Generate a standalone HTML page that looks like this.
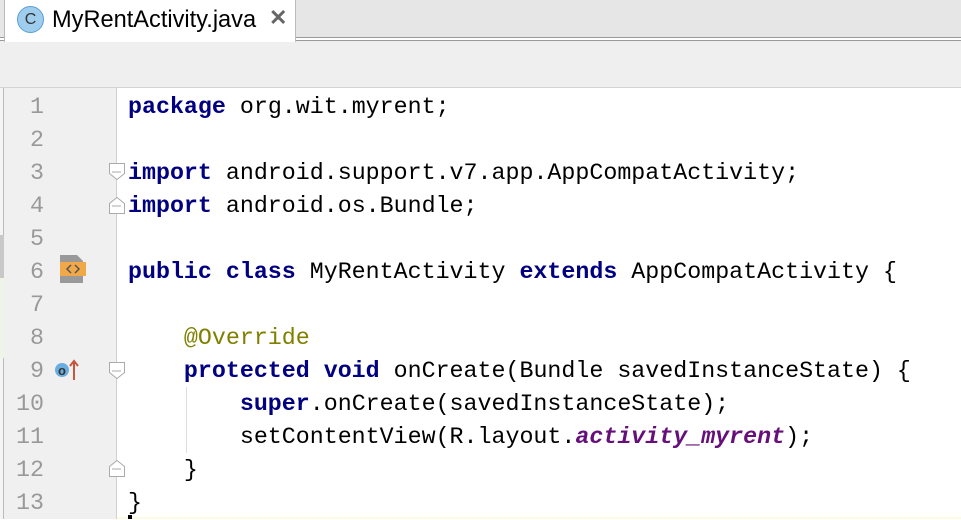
<!DOCTYPE html>
<html><head><meta charset="utf-8"><style>
*{margin:0;padding:0;box-sizing:border-box}
body{width:961px;height:519px;overflow:hidden;background:#fff;position:relative;font-family:"Liberation Sans",sans-serif}
.tabbar{position:absolute;left:0;top:0;width:961px;height:38px;background:#e6e6e6;border-bottom:1px solid #999}
.tab{position:absolute;left:4px;top:0;width:292px;height:42px;background:#fff;border-left:1px solid #bbb;border-right:1px solid #bbb;z-index:2}
.tab .ic{position:absolute;left:12px;top:6px;width:27px;height:27px;border-radius:50%;background:#9fcdee;border:1px solid #5a9fd6;color:#333;font-size:16px;text-align:center;line-height:25px}
.tab .t{position:absolute;left:47px;top:7px;font-size:23.6px;color:#000}
.tab .x{position:absolute;left:264px;top:5px;font-size:22px;color:#666;font-weight:bold}
.strip{position:absolute;left:0;top:40px;width:961px;height:48px;background:#efefef;border-top:1px solid #999;border-bottom:1px solid #d4d4d4}
.left{position:absolute;left:0;top:88px;width:4px;height:431px;background:#f4f4f4;border-right:1px solid #bbb}
.gut{position:absolute;left:4px;top:88px;width:113px;height:431px;background:#f0f0f0;border-right:1px solid #d0d0d0}
.ln{position:absolute;left:4px;top:91px;width:40px;font:23.3px/33px "Liberation Mono",monospace;color:#999;text-align:right}
.code{position:absolute;left:128px;top:91px;font:23.3px/33px "Liberation Mono",monospace;color:#000;white-space:pre}
.k{color:#000080;font-weight:bold}.a{color:#808000}.f{color:#660e7a;font-weight:bold;font-style:italic}
</style></head><body>
<div class="tabbar"></div>
<div class="tab"><div class="ic">C</div><div class="t">MyRentActivity.java</div><div class="x">✕</div></div>
<div class="strip"></div>
<div class="left"></div>
<div style="position:absolute;left:0;top:235px;width:4px;height:43px;background:#c8c8c8"></div>
<div style="position:absolute;left:0;top:278px;width:4px;height:80px;background:#eef5e8"></div>
<div class="gut"></div>
<div style="position:absolute;left:117px;top:517px;width:844px;height:2px;background:#fffae3"></div>
<div class="ln">1<br>2<br>3<br>4<br>5<br>6<br>7<br>8<br>9<br>10<br>11<br>12<br>13</div>
<div style="position:absolute;left:186px;top:387px;width:1px;height:66px;background:#ddd"></div>
<svg style="position:absolute;left:0;top:0" width="961" height="519">
<g fill="#fff" stroke="#aaa" stroke-width="1">
<path d="M109.5 163.5h15v10l-7.5 6l-7.5-6z"/><path d="M109.5 213.5h15v-10l-7.5-6l-7.5 6z"/>
<path d="M109.5 362.5h15v10l-7.5 6l-7.5-6z"/><path d="M109.5 476.5h15v-10l-7.5-6l-7.5 6z"/>
</g>
<g stroke="#aaa"><path d="M112 172h9M112 206h9M112 371h9M112 469h9"/></g>
<path d="M60 255h17l6 6v22h-23z" fill="#999"/><rect x="60" y="262" width="26" height="14" fill="#f0a848"/>
<path d="M71 265l-4 4l4 4M75 265l4 4l-4 4" stroke="#555" stroke-width="1.5" fill="none"/>
<circle cx="62" cy="370" r="7" fill="#6aaee0"/><text x="62" y="375" font-size="13" font-family="Liberation Sans" font-weight="bold" text-anchor="middle" fill="#333">o</text>
<path d="M74 380v-19M70 366l4-5l4 5" stroke="#c8553d" stroke-width="2" fill="none"/>
<rect x="128" y="515" width="4" height="4" fill="#000"/>
</svg>
<div class="code"><span class="k">package</span> org.wit.myrent;

<span class="k">import</span> android.support.v7.app.AppCompatActivity;
<span class="k">import</span> android.os.Bundle;

<span class="k">public class</span> MyRentActivity <span class="k">extends</span> AppCompatActivity {

    <span class="a">@Override</span>
    <span class="k">protected void</span> onCreate(Bundle savedInstanceState) {
        <span class="k">super</span>.onCreate(savedInstanceState);
        setContentView(R.layout.<span class="f">activity_myrent</span>);
    }
}</div>
</body></html>
